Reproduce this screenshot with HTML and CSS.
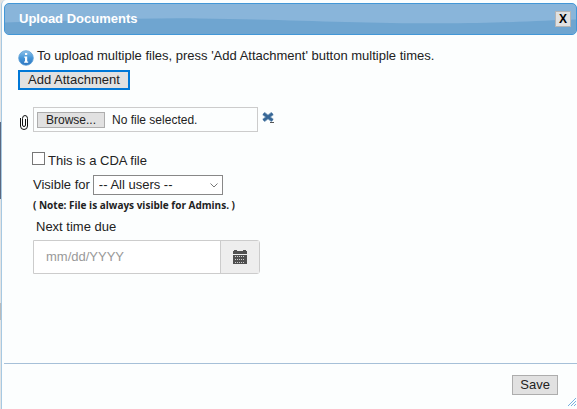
FILE: index.html
```
<!DOCTYPE html>
<html lang="en">
<head>
    <meta charset="UTF-8">
    <meta name="viewport" content="width=device-width, initial-scale=1.0">
    <title>Upload Documents</title>
    <link rel="stylesheet" href="styles.css">
</head>
<body>
    <form class="dialog">
        <header class="titlebar">
            <svg class="gloss" viewBox="0 0 573 31" preserveAspectRatio="none">
                <path d="M0 19C70 18 130 14 195 15C290 16 350 20 435 20C500 20 540 17 573 16V31H0Z" fill="#6fa5d0"/>
            </svg>
            <h1>Upload Documents</h1>
            <button class="close" type="button">X</button>
        </header>

        <main>
            <p class="info">
                <svg width="16" height="16" viewBox="0 0 16 16">
                    <defs>
                        <linearGradient id="ball" x1="0" y1="0" x2="0" y2="1">
                            <stop offset="0" stop-color="#8fc3ea"/>
                            <stop offset="0.5" stop-color="#4596d8"/>
                            <stop offset="1" stop-color="#2b74c0"/>
                        </linearGradient>
                    </defs>
                    <circle cx="8" cy="8" r="7.3" fill="url(#ball)" stroke="#5d9fd5" stroke-width="0.8"/>
                    <path d="M7 3h2.2v2H7zM6.3 6.5h2.9v5h1v1.3H6.1v-1.3H7V7.8h-.7z" fill="#fff"/>
                </svg>
                To upload multiple files, press 'Add Attachment' button multiple times.
            </p>
            <button class="btn add" type="button">Add Attachment</button>

            <div class="attachment">
                <svg class="clip" width="9" height="15" viewBox="0 0 9 15" fill="none" stroke="#111" stroke-width="1">
                    <path d="M.5 3v8q0 3.500 3.500 3.500t3.500-3.500V3.500q0-3-2.500-3t-2.500 3V10q0 1.500 1.500 1.500t1.500-1.500V4"/>
                </svg>
                <label class="file">
                    <input type="file">
                    <span class="browse">Browse...</span>
                    <span>No file selected.</span>
                </label>
                <button class="remove" type="button" aria-label="Remove">
                    <svg width="13" height="11" viewBox="0 0 13 11">
                        <path d="M1.500 1.500l9 7M10.500 1.500l-9 7" stroke="#8caac5" stroke-width="4"/>
                        <path d="M1.500 1.500l9 7M10.500 1.500l-9 7" stroke="#376796" stroke-width="2.500"/>
                        <path d="M8 10.500h4" stroke="#555"/>
                    </svg>
                </button>
            </div>

            <div class="check">
                <input type="checkbox" id="cda">
                <label for="cda">This is a CDA file</label>
            </div>
            <div class="visible">
                <label for="users">Visible for</label>
                <select id="users">
                    <option>-- All users --</option>
                </select>
            </div>
            <p class="note">( Note: File is always visible for Admins. )</p>
            <label class="due" for="due">Next time due</label>
            <div class="date">
                <input type="text" id="due" placeholder="mm/dd/YYYY">
                <button type="button" aria-label="Calendar">
                    <svg width="14" height="14" viewBox="0 0 14 14">
                        <path d="M0 1h1V0h3v1h6V0h3v1h1v3H0zM0 5h14v9H0z" fill="#505050"/>
                        <path d="M2 6.500h10M2 9.500h10M2 12.500h10" stroke="#ccc" stroke-dasharray="1 1"/>
                    </svg>
                </button>
            </div>
        </main>

        <footer>
            <button class="btn" type="submit">Save</button>
            <svg class="grip" width="8" height="8" viewBox="0 0 8 8" stroke="#3f8fd0">
                <path d="M0 8L8 0M3 8L8 3M6 8L8 6" stroke-dasharray="1 .4"/>
            </svg>
        </footer>
    </form>
</body>
</html>
```
FILE: styles.css
```
* {
    box-sizing: border-box;
}
body {
    margin: 0;
    padding-left: 1px;
    background: linear-gradient(#e4e4e4 122px, #5b6880 122px, #5b6880 199px, #e4e4e4 199px, #e4e4e4 303px, #bbb 303px, #bbb 320px, #e4e4e4 320px);
    color: #222;
    font-family: "Liberation Sans", Arial, sans-serif;
    font-size: 13px;
    line-height: 16px;
}
button, input, select {
    font: inherit;
    color: inherit;
}
p, h1 {
    margin: 0;
}
.dialog {
    display: flex;
    flex-direction: column;
    min-height: 100vh;
    padding: 3px 0 0 2px;
    border-left: 1px solid #a6c9e2;
    border-top-left-radius: 5px;
    background: #fcfefe;
}

/* title bar */
.titlebar {
    position: relative;
    display: flex;
    align-items: center;
    justify-content: space-between;
    height: 32px;
    padding: 0 5px 0 14px;
    border: 1px solid #4297d7;
    border-radius: 5px;
    background: #89b5da;
    overflow: hidden;
}
.gloss {
    position: absolute;
    inset: 0;
    width: 100%;
    height: 100%;
}
.titlebar h1 {
    position: relative;
    color: #fff;
    font-size: 13px;
}
.close {
    position: relative;
    width: 16px;
    height: 16px;
    padding: 0;
    border: 1px solid #b5b5b5;
    background: #e1e1e1;
    color: #000;
    font-size: 12px;
    font-weight: bold;
    line-height: 14px;
}

/* content */
main {
    flex: 1;
    padding: 13px 14px;
}
.info {
    display: flex;
    gap: 3px;
}
.info svg {
    margin-top: 2px;
}
.btn {
    display: block;
    height: 20px;
    padding: 0 7px;
    border: 1px solid #adadad;
    background: #e1e1e1;
    line-height: 16px;
}
.add {
    margin-top: 4px;
    padding: 0 8px;
    border: 2px solid #0078d7;
}
.attachment {
    display: flex;
    align-items: flex-start;
    margin-top: 17px;
}
.clip {
    margin: 8px 4px 0 2px;
}
.file {
    position: relative;
    display: flex;
    align-items: center;
    gap: 7px;
    width: 225px;
    height: 25px;
    padding: 0 3px;
    border: 1px solid #ccc;
    font-size: 12px;
}
.file input {
    position: absolute;
    inset: 0;
    width: 100%;
    opacity: 0;
}
.browse {
    height: 16px;
    padding: 0 8px;
    border: 1px solid #adadad;
    background: #e1e1e1;
    line-height: 14px;
}
.remove {
    margin: 5px 0 0 4px;
    padding: 0;
    border: 0;
    background: none;
    line-height: 0;
}
.check {
    display: flex;
    align-items: flex-start;
    gap: 3px;
    margin: 20px 0 0 14px;
}
.check label {
    padding-top: 1px;
}
.check input {
    appearance: none;
    width: 13px;
    height: 13px;
    margin: 0;
    border: 1px solid #777;
    background: #fff;
}
.visible {
    display: flex;
    align-items: center;
    gap: 3px;
    margin: 6px 0 0 15px;
}
select {
    appearance: none;
    width: 130px;
    height: 20px;
    padding: 0 5px;
    border: 1px solid #888;
    border-radius: 0;
    background: #fff url("data:image/svg+xml,%3Csvg xmlns='http://www.w3.org/2000/svg' width='8' height='5' fill='none' stroke='%23777'%3E%3Cpath d='M.5.5L4 4L7.500.5'/%3E%3C/svg%3E") no-repeat right 4px center;
}
.note {
    margin: 2px 0 0 15px;
    font-family: "Open Sans", "Liberation Sans", sans-serif;
    font-size: 10px;
    font-weight: bold;
}
.due {
    display: block;
    margin: 6px 0 5px 18px;
}
.date {
    display: flex;
    width: 227px;
    height: 34px;
    margin-left: 15px;
    border: 1px solid #ccc;
    border-radius: 0 3px 3px 0;
    background: #fff;
}
.date input {
    flex: 1;
    min-width: 0;
    padding: 0 12px;
    border: 0;
    background: none;
}
.date input::placeholder {
    color: #999;
}
.date button {
    width: 39px;
    padding: 0;
    border: 0;
    border-left: 1px solid #ccc;
    background: #eee;
    line-height: 0;
}

/* button bar */
footer {
    position: relative;
    display: flex;
    justify-content: flex-end;
    padding: 11px 19px 14px;
    border-top: 1px solid #a6c0d8;
}
.grip {
    position: absolute;
    right: 1px;
    bottom: 3px;
}
```
